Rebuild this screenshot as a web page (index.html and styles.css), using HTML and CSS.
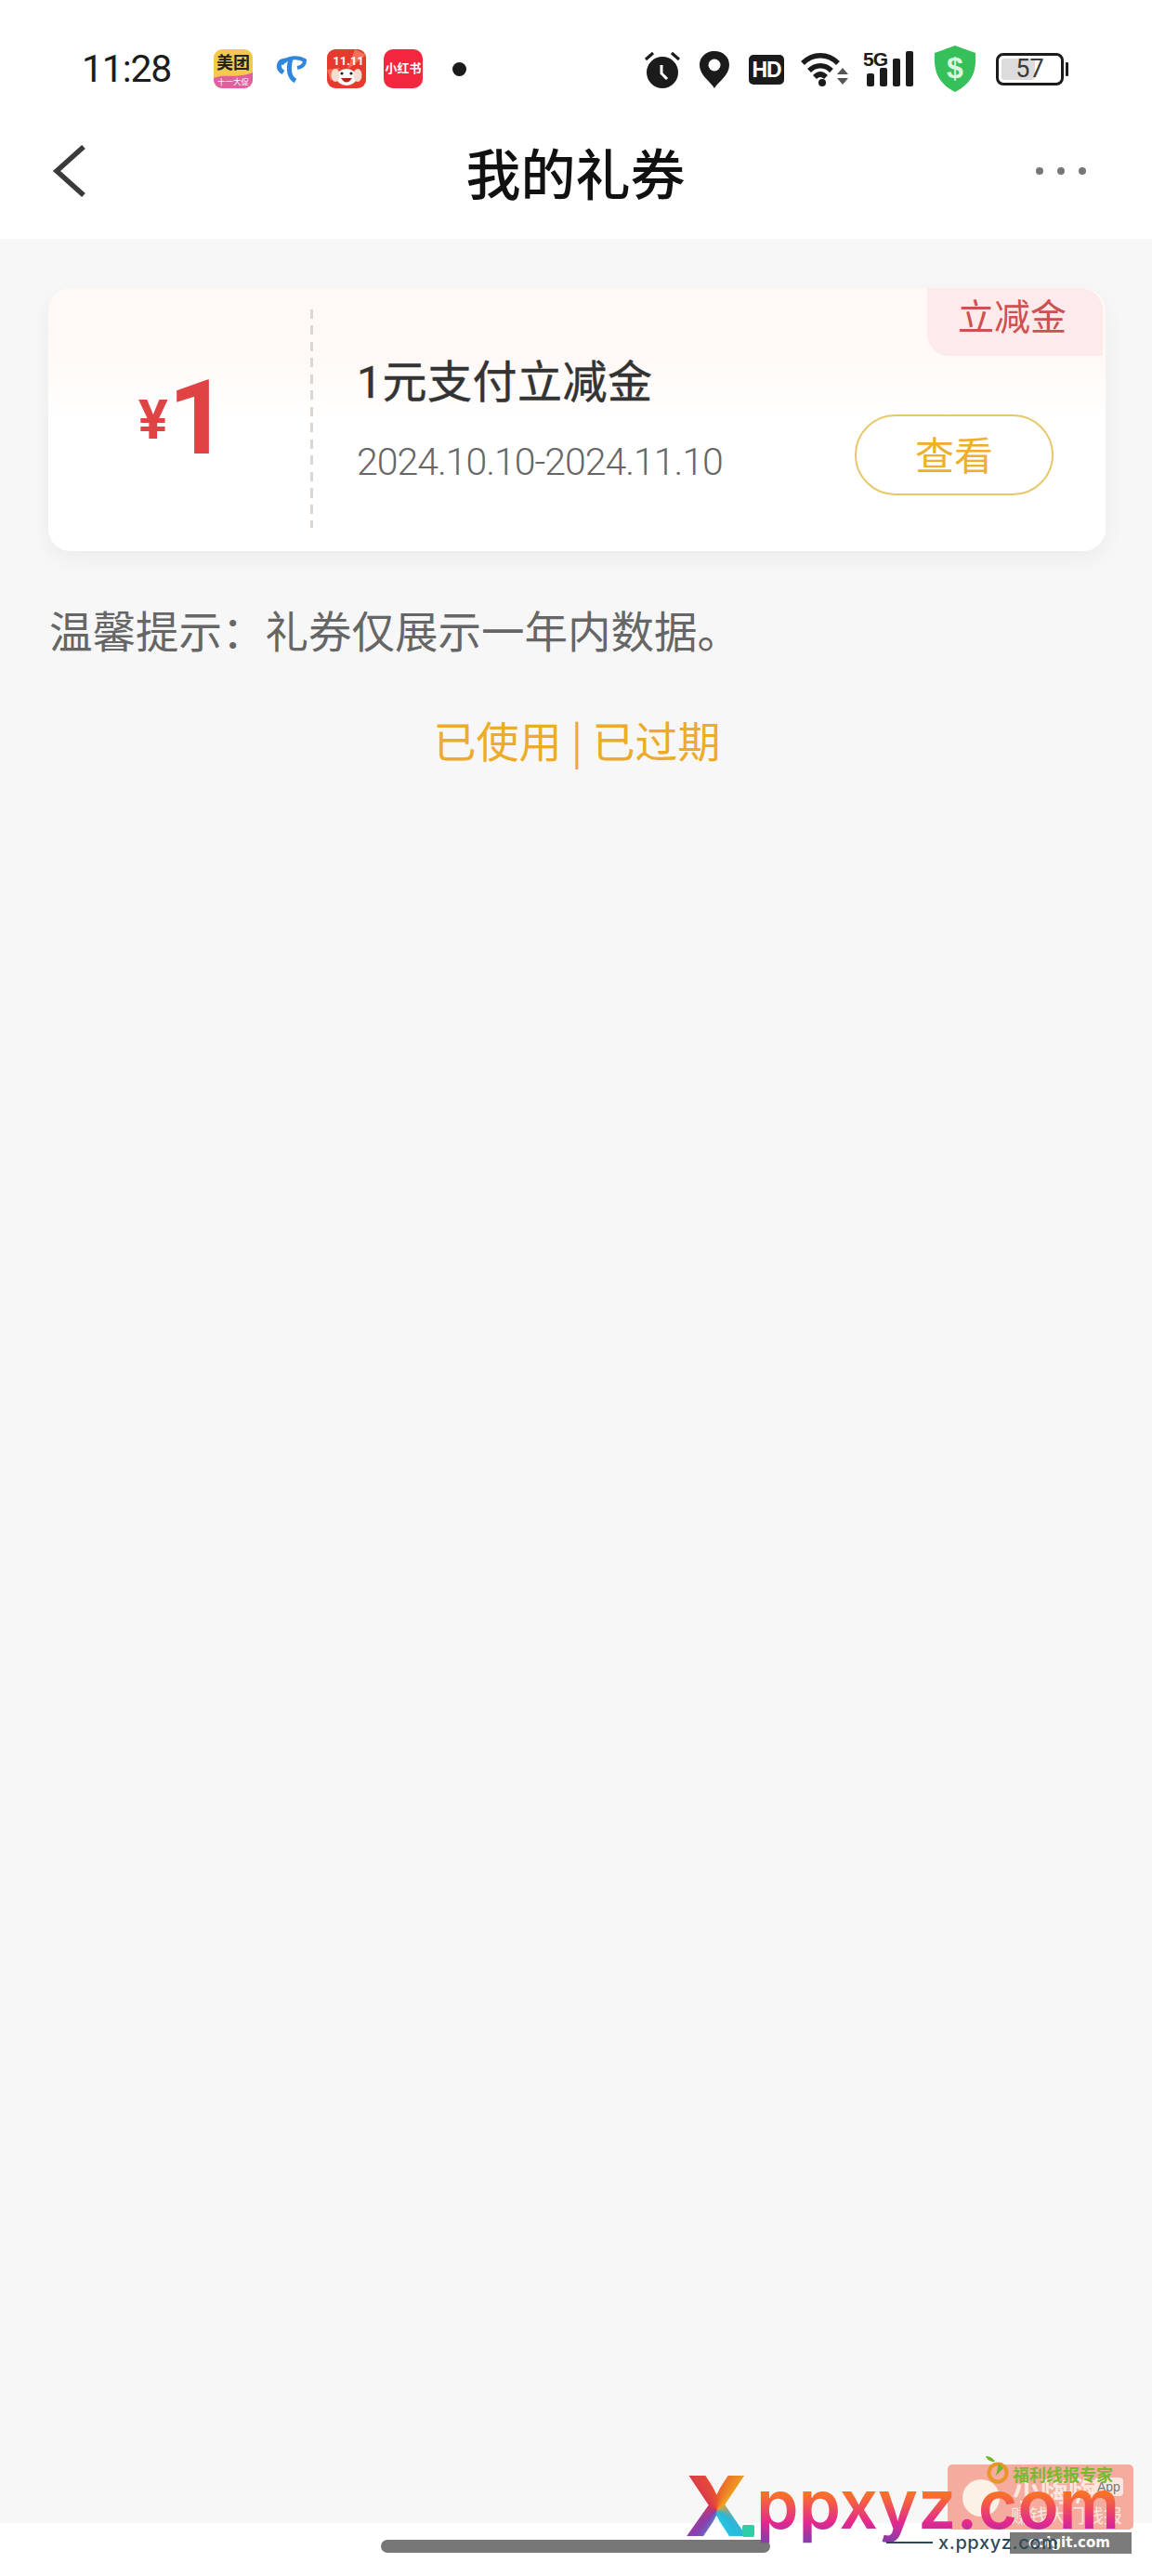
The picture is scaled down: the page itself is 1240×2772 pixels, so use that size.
FILE: index.html
```html
<!DOCTYPE html>
<html lang="zh-CN">
<head>
    <meta charset="UTF-8">
    <meta name="viewport" content="width=device-width, initial-scale=1.0">
    <title>我的礼券</title>
    <link rel="stylesheet" href="styles.css">
</head>
<body>

    <!-- Status bar -->
    <div class="status-bar">
        <div class="time">11:28</div>
        <div class="app-icons">
            <svg class="app-icon" viewBox="0 0 42 42">
                <rect width="42" height="42" rx="9" fill="#f5c94e"/>
                <path d="M0 31 C12 26 24 32 42 25 V33 A9 9 0 0 1 33 42 H9 A9 9 0 0 1 0 33Z" fill="#e0609f"/>
                <text x="21" y="21" class="mt-text">美团</text>
                <text x="21" y="38" class="mt-sub">十一大促</text>
            </svg>
            <svg class="app-icon" viewBox="0 0 42 42">
                <path d="M17 12 C9 12 6 20 14 25" stroke="#2f86dd" stroke-width="5" fill="none"/>
                <path d="M12 16 C17 9 29 7 37 12 C37 16 34 19 29 20" stroke="#2f86dd" stroke-width="4" fill="none"/>
                <path d="M22 10 C19 21 20 30 27 34" stroke="#2f86dd" stroke-width="5" fill="none"/>
            </svg>
            <svg class="app-icon" viewBox="0 0 42 42">
                <rect width="42" height="42" rx="9" fill="#e63a2e"/>
                <path d="M30 0 L42 6 L22 22Z M0 22 L14 20 L4 34Z" fill="#f3705c"/>
                <text x="23" y="17" class="eleven-text">11.11</text>
                <ellipse cx="21" cy="30" rx="11" ry="9" fill="#fff"/>
                <ellipse cx="9" cy="28" rx="4.5" ry="7" fill="#f7dcd0"/>
                <ellipse cx="33" cy="28" rx="4.5" ry="7" fill="#f7dcd0"/>
                <path d="M15 31 Q21 40 27 31Z" fill="#b5231c"/>
                <circle cx="16" cy="26" r="1.6" fill="#222"/>
                <circle cx="26" cy="26" r="1.6" fill="#222"/>
            </svg>
            <div class="xhs-icon">小红书</div>
            <div class="notify-dot"></div>
        </div>
        <div class="sys-icons">
            <svg class="alarm" viewBox="0 0 38 40">
                <circle cx="19" cy="23" r="17" fill="#1b1b1b"/>
                <path d="M1 9 L9 2 M37 9 L29 2" stroke="#1b1b1b" stroke-width="3.2"/>
                <path d="M18 15 L18 24 L24 30" stroke="#fff" stroke-width="3" fill="none"/>
            </svg>
            <svg class="pin" viewBox="0 0 32 40">
                <path d="M16 40 C12 33 0 26 0 15 C0 6 7 0 16 0 C25 0 32 6 32 15 C32 26 20 33 16 40Z" fill="#1b1b1b"/>
                <circle cx="16" cy="15" r="6.5" fill="#fff"/>
            </svg>
            <div class="hd-icon">HD</div>
            <svg class="wifi" viewBox="0 0 52 39">
                <path d="M3 13 C14 2 30 2 41 13 M10 21 C17 14 27 14 34 21 M16 28 C20 24 24 24 28 28" stroke="#1b1b1b" stroke-width="5.5" fill="none"/>
                <circle cx="24" cy="34" r="4" fill="#1b1b1b"/>
                <path d="M40 25 L46 18 L52 25Z M40 29 H52 L46 36Z" fill="#555"/>
            </svg>
            <div class="signal">
                <span class="signal-label">5G</span>
                <span class="bar bar-1"></span>
                <span class="bar bar-2"></span>
                <span class="bar bar-3"></span>
                <span class="bar bar-4"></span>
            </div>
            <svg class="shield" viewBox="0 0 48 50">
                <path d="M24 0 L46 8 C47 26 44 40 24 50 C4 40 1 26 2 8Z" fill="#36c05a"/>
                <text x="24" y="35" class="shield-text">$</text>
            </svg>
            <div class="battery">
                <div class="battery-body">
                    <div class="battery-level"></div>
                    <span class="battery-text">57</span>
                </div>
                <div class="battery-nub"></div>
            </div>
        </div>
    </div>

    <!-- Title bar -->
    <div class="nav-bar">
        <svg class="back" viewBox="0 0 36 56">
            <path d="M34 2 L5 28 L34 54" stroke="#3a3a3a" stroke-width="5.5" fill="none"/>
        </svg>
        <h1 class="nav-title">我的礼券</h1>
        <div class="more">
            <span></span><span></span><span></span>
        </div>
    </div>

    <div class="content">
        <div class="coupon">
            <div class="coupon-amount">
                <span class="currency">¥</span><span class="amount">1</span>
            </div>
            <div class="coupon-divider"></div>
            <div class="coupon-body">
                <div class="coupon-info">
                    <div class="coupon-name">1元支付立减金</div>
                    <div class="coupon-date">2024.10.10-2024.11.10</div>
                </div>
                <div class="coupon-btn">查看</div>
            </div>
            <div class="coupon-tag">立减金</div>
        </div>
        <p class="tip">温馨提示：礼券仅展示一年内数据。</p>
        <div class="history">已使用 | 已过期</div>
    </div>

    <div class="bottom-bar"></div>
    <div class="home-indicator"></div>

    <!-- Watermark stamped over the screenshot -->
    <div class="watermark">
        <div class="wm-panel">
            <span class="wm-panel-title">小嗨嗨</span>
            <span class="wm-panel-app">App</span>
            <span class="wm-panel-sub">赚钱大门线报</span>
            <span class="wm-face"></span>
        </div>
        <svg class="wm-logo" viewBox="0 0 26 30">
            <path d="M8 6 C4 5 2 3 1 0 C5 0 9 2 11 6Z" fill="#6fb52c"/>
            <circle cx="14" cy="18" r="9.5" fill="none" stroke="#e8962a" stroke-width="4"/>
            <path d="M15 8 L20 13 L12 21Z" fill="#6fb52c"/>
        </svg>
        <span class="wm-green">福利线报专家</span>
        <span class="wm-x">X</span>
        <span class="wm-point"></span>
        <span class="wm-domain">ppxyz.com</span>
        <span class="wm-line"></span>
        <span class="wm-grey">coigit.com</span>
        <span class="wm-small">x.ppxyz.com</span>
    </div>

</body>
</html>
```

FILE: styles.css
```css
* {
    box-sizing: border-box;
}

body {
    margin: 0;
    width: 1240px;
    height: 2772px;
    position: relative;
    overflow: hidden;
    display: flex;
    flex-direction: column;
    background: #fff;
    font-family: "Roboto", "Noto Sans CJK SC", sans-serif;
}

/* Status bar */
.status-bar {
    display: flex;
    align-items: center;
    justify-content: space-between;
    height: 50px;
    margin-top: 49px;
    padding: 0 90px 0 88px;
}

.time {
    width: 94px;
    font-size: 41px;
    line-height: 50px;
    color: #1c1c1c;
    letter-spacing: -1.2px;
    white-space: nowrap;
}

.app-icons {
    display: flex;
    align-items: center;
    gap: 19px;
    margin-left: 48px;
    margin-right: auto;
}

.app-icon {
    width: 42px;
    height: 42px;
}

.mt-text {
    font-size: 18px;
    font-weight: 700;
    text-anchor: middle;
    fill: #222;
}

.mt-sub {
    font-size: 8.5px;
    text-anchor: middle;
    fill: #fff;
}

.eleven-text {
    font-size: 13px;
    font-weight: 700;
    text-anchor: middle;
    fill: #fff;
}

.xhs-icon {
    width: 42px;
    height: 42px;
    border-radius: 10px;
    background: #f5273f;
    color: #fff;
    font-size: 13px;
    font-weight: 700;
    line-height: 42px;
    text-align: center;
    white-space: nowrap;
}

.notify-dot {
    width: 15px;
    height: 15px;
    margin-left: 13px;
    border-radius: 50%;
    background: #1b1b1b;
}

.sys-icons {
    display: flex;
    align-items: center;
    gap: 20px;
}

.alarm {
    width: 38px;
    height: 40px;
    margin-top: 1px;
    margin-right: 1px;
}

.pin {
    width: 32px;
    height: 40px;
    margin-top: 1px;
    margin-right: 1px;
}

.hd-icon {
    width: 38px;
    height: 32px;
    margin-top: 2px;
    border-radius: 5px;
    background: #1b1b1b;
    color: #fff;
    font-family: "Liberation Sans", sans-serif;
    font-size: 23px;
    font-weight: 700;
    line-height: 32px;
    letter-spacing: -1px;
    text-align: center;
}

.wifi {
    width: 52px;
    height: 39px;
    margin-left: -3px;
}

.signal {
    position: relative;
    display: flex;
    align-items: flex-end;
    gap: 6px;
    width: 56px;
    height: 38px;
    margin-left: -4px;
    padding-left: 4px;
}

.signal-label {
    position: absolute;
    top: -3px;
    left: 0;
    font-family: "Liberation Sans", sans-serif;
    font-size: 21px;
    font-weight: 700;
    line-height: 24px;
    letter-spacing: -1px;
    color: #1b1b1b;
}

.bar {
    width: 8px;
    border-radius: 2px;
    background: #1b1b1b;
}

.bar-1 { height: 14px; }
.bar-2 { height: 20px; }
.bar-3 { height: 30px; }
.bar-4 { height: 38px; }

.shield {
    width: 48px;
    height: 50px;
    margin-left: -1px;
}

.shield-text {
    font-family: "Liberation Sans", sans-serif;
    font-size: 32px;
    font-weight: 700;
    text-anchor: middle;
    fill: #d9f7df;
}

.battery {
    display: flex;
    align-items: center;
    gap: 2px;
    width: 78px;
}

.battery-body {
    position: relative;
    width: 73px;
    height: 35px;
    border: 3px solid #1b1b1b;
    border-radius: 8px;
    padding: 3px;
}

.battery-level {
    width: 36px;
    height: 100%;
    border-radius: 3px;
    background: #dcdcdc;
}

.battery-text {
    position: absolute;
    top: 0;
    left: 0;
    width: 100%;
    font-size: 27px;
    line-height: 29px;
    text-align: center;
    color: #3a3a3a;
}

.battery-nub {
    width: 3px;
    height: 15px;
    border-radius: 1px;
    background: #1b1b1b;
}

/* Title bar */
.nav-bar {
    display: flex;
    align-items: center;
    justify-content: space-between;
    height: 158px;
    padding: 12px 71px 0 56px;
}

.back {
    width: 36px;
    height: 56px;
}

.nav-title {
    margin: 0 0 0 32px;
    font-family: "Noto Sans CJK SC", sans-serif;
    font-size: 59px;
    font-weight: 500;
    color: #111;
}

.more {
    display: flex;
    gap: 15px;
}

.more span {
    width: 8px;
    height: 8px;
    border-radius: 50%;
    background: #777;
}

/* Page body */
.content {
    flex: 1;
    padding: 53px 50px 0 52px;
    background: #f7f7f7;
}

.coupon {
    position: relative;
    display: flex;
    height: 283px;
    border-radius: 24px;
    background: linear-gradient(#fff8f5, #fffaf7 30%, #fff 50%);
    box-shadow: 0 8px 24px rgba(0, 0, 0, 0.05);
}

.coupon-amount {
    display: flex;
    align-items: flex-start;
    justify-content: center;
    width: 282px;
    padding: 84px 2px 0 0;
    color: #e04343;
    font-family: "Roboto", sans-serif;
    font-weight: 700;
    line-height: 112px;
}

.currency {
    font-size: 60px;
    line-height: 50px;
    margin-top: 33px;
}

.amount {
    font-size: 112px;
    letter-spacing: -10px;
}

.coupon-divider {
    width: 3px;
    height: 235px;
    margin-top: 23px;
    background: repeating-linear-gradient(#dcd6d3 0 10px, transparent 10px 17.5px);
}

.coupon-body {
    flex: 1;
    display: flex;
    justify-content: space-between;
    padding: 0 56px 0 47px;
}

.coupon-name {
    margin-top: 67px;
    font-size: 48px;
    font-weight: 400;
    line-height: 70px;
    letter-spacing: 0.5px;
    color: #333;
    -webkit-text-stroke: 0.5px #333;
    white-space: nowrap;
}

.coupon-date {
    margin-top: 25px;
    font-family: "Roboto", sans-serif;
    font-size: 41px;
    font-weight: 300;
    line-height: 50px;
    letter-spacing: -1px;
    color: #666;
    white-space: nowrap;
}

.coupon-btn {
    width: 214px;
    height: 87px;
    margin-top: 136px;
    border: 2px solid #e8c66a;
    border-radius: 44px;
    color: #f0ae2d;
    font-family: "Noto Sans CJK SC", sans-serif;
    font-size: 42px;
    line-height: 79px;
    text-align: center;
}

.coupon-tag {
    position: absolute;
    top: 0;
    right: 3px;
    width: 189px;
    height: 73px;
    border-radius: 0 24px 0 24px;
    background: #fdeaea;
    color: #cf5050;
    font-family: "Noto Sans CJK SC", sans-serif;
    font-size: 39px;
    line-height: 57px;
    padding-left: 33px;
    white-space: nowrap;
}

.tip {
    margin: 49px 0 0 1px;
    font-family: "Noto Sans CJK SC", sans-serif;
    font-size: 46.5px;
    line-height: 70px;
    color: #666;
    white-space: nowrap;
}

.history {
    margin-top: 48px;
    font-family: "Noto Sans CJK SC", sans-serif;
    font-size: 46px;
    line-height: 70px;
    text-align: center;
    color: #edab2a;
}

.bottom-bar {
    height: 57px;
    background: #fff;
}

.home-indicator {
    position: absolute;
    left: 410px;
    top: 2733px;
    width: 419px;
    height: 14px;
    border-radius: 7px;
    background: #777;
}

/* Watermark */
.watermark {
    position: absolute;
    left: 0;
    top: 0;
    width: 1240px;
    height: 2772px;
    pointer-events: none;
}

.wm-panel {
    position: absolute;
    left: 1020px;
    top: 2652px;
    width: 200px;
    height: 70px;
    border-radius: 5px;
    background: #f5ab9e;
    overflow: hidden;
}

.wm-panel-title {
    position: absolute;
    left: 70px;
    top: 8px;
    font-family: "Noto Sans CJK SC", sans-serif;
    font-size: 30px;
    font-weight: 700;
    line-height: 36px;
    color: #fbe7df;
}

.wm-panel-app {
    position: absolute;
    left: 158px;
    top: 14px;
    padding: 0 3px;
    border-radius: 4px;
    background: #fbe7df;
    font-family: "Liberation Sans", sans-serif;
    font-size: 14px;
    line-height: 20px;
    color: #777;
}

.wm-panel-sub {
    position: absolute;
    left: 68px;
    top: 42px;
    font-family: "Noto Sans CJK SC", sans-serif;
    font-size: 20px;
    line-height: 26px;
    color: #fbe7df;
    white-space: nowrap;
}

.wm-face {
    position: absolute;
    left: 16px;
    top: 16px;
    width: 40px;
    height: 40px;
    border-radius: 50%;
    background: #fbf1e6;
}

.wm-logo {
    position: absolute;
    left: 1060px;
    top: 2643px;
    width: 26px;
    height: 30px;
}

.wm-green {
    position: absolute;
    left: 1090px;
    top: 2651px;
    font-family: "Noto Sans CJK SC", sans-serif;
    font-size: 18px;
    font-weight: 700;
    line-height: 22px;
    color: #7ab82e;
    white-space: nowrap;
}

.wm-x {
    position: absolute;
    left: 737px;
    top: 2652px;
    font-family: "Inter", sans-serif;
    font-size: 90px;
    font-weight: 800;
    line-height: 90px;
    background: conic-gradient(from 0deg at 50% 55%, #e8552f, #f0a020 12%, #2fb4d8 35%, #20c8e0 45%, #8a3fb0 62%, #d8344f 85%, #e8552f);
    -webkit-background-clip: text;
    background-clip: text;
    color: transparent;
}

.wm-point {
    position: absolute;
    left: 799px;
    top: 2717px;
    width: 13px;
    height: 13px;
    border-radius: 2px;
    background: #2dcfa8;
}

.wm-domain {
    position: absolute;
    left: 814px;
    top: 2650px;
    font-family: "Inter", sans-serif;
    font-size: 73px;
    font-weight: 600;
    line-height: 90px;
    background: linear-gradient(#f9702a 38%, #e2288f 72%, #8e3aa8 92%);
    -webkit-background-clip: text;
    background-clip: text;
    color: transparent;
    white-space: nowrap;
}

.wm-line {
    position: absolute;
    left: 954px;
    top: 2735px;
    width: 50px;
    height: 2px;
    background: #2d4a5a;
}

.wm-grey {
    position: absolute;
    left: 1087px;
    top: 2725px;
    width: 131px;
    height: 23px;
    padding-left: 20px;
    background: rgba(90, 90, 90, 0.8);
    font-family: "DejaVu Sans", sans-serif;
    font-size: 15px;
    font-weight: 700;
    line-height: 23px;
    color: #fff;
    white-space: nowrap;
}

.wm-small {
    position: absolute;
    left: 1010px;
    top: 2724px;
    font-family: "Inter", sans-serif;
    font-size: 20px;
    font-weight: 500;
    line-height: 24px;
    letter-spacing: 0.6px;
    color: #2d4a5a;
    white-space: nowrap;
}
```
